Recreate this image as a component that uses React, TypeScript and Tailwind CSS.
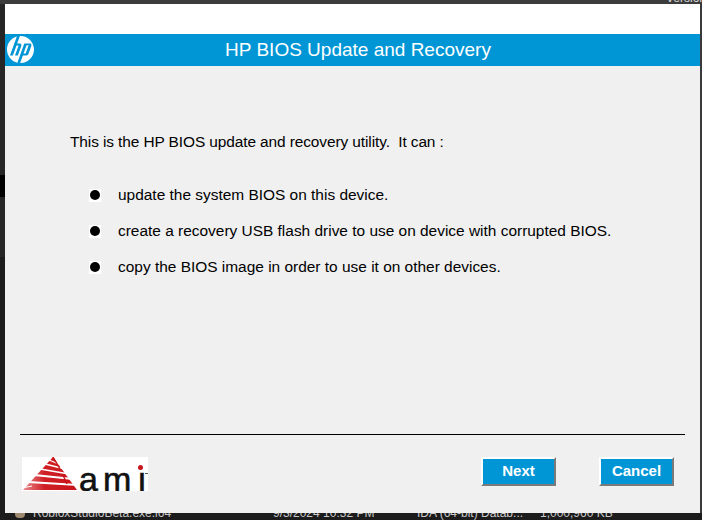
import { SiHp } from "react-icons/si";

const items = [
  "update the system BIOS on this device.",
  "create a recovery USB flash drive to use on device with corrupted BIOS.",
  "copy the BIOS image in order to use it on other devices.",
];

function AmiLogo() {
  return (
    <div className="relative flex h-[34px] w-[126px] items-end overflow-hidden bg-white">
      <svg width="56" height="34" viewBox="0 0 56 34" className="shrink-0">
        <defs>
          <linearGradient id="amiFade" x1="0" x2="1" y1="0" y2="0">
            <stop offset="0" stopColor="#e98a8d" />
            <stop offset="0.4" stopColor="#cf1f25" />
            <stop offset="1" stopColor="#c8151b" />
          </linearGradient>
        </defs>
        <polygon points="31,0 1,33 55,33" fill="url(#amiFade)" />
        <g stroke="#fff" fill="none">
          <path d="M27 3 L39 8" strokeWidth="1.2" />
          <path d="M23 7 L43 12" strokeWidth="1.4" />
          <path d="M18 12 L47 17" strokeWidth="1.7" />
          <path d="M12 18 L51 22" strokeWidth="2" />
          <path d="M6 25 L56 28" strokeWidth="2.2" />
          <path d="M0 31 L10 29" strokeWidth="1" />
        </g>
        <path d="M31 0 L38 12 M41 18 L45 27" stroke="#c8151b" strokeWidth="1.4" fill="none" />
      </svg>
      <span className="mb-[-5px] ml-[1px] whitespace-nowrap text-[34px] leading-[34px] tracking-[5px] text-[#111] [-webkit-text-stroke:0.6px_#111]">
        am
      </span>
      <span className="mb-[-5px] ml-[1px] text-[34px] leading-[34px] text-[#111] [-webkit-text-stroke:0.6px_#111]">ı</span>
      <span className="absolute left-[116px] top-[8px] h-[5px] w-[5px] rounded-full bg-[#c8151b]" />
      <span className="absolute left-[123px] top-[16px] h-px w-[3px] bg-[#555]" />
    </div>
  );
}

function NavButton({ label }: { label: string }) {
  return (
    <button className="flex h-[29px] w-[75px] items-center justify-center border-2 border-t-white border-l-white border-r-[#7a7a7a] border-b-[#7a7a7a] bg-[#0096d6] text-[15px] font-bold text-white">
      {label}
    </button>
  );
}

export default function App() {
  return (
    <div className="flex h-[520px] w-[702px] flex-col overflow-hidden bg-[#1c1c1c] font-['Liberation_Sans',sans-serif]">
      <div className="flex h-[4px] shrink-0 justify-end overflow-hidden bg-[#3c3c3c]">
        <span className="mr-[-4px] mt-[-9px] text-[12px] leading-[14px] text-[#d8d8d8]">Version</span>
      </div>
      <div className="flex h-[509px] shrink-0">
        <div className="flex w-[5px] shrink-0 flex-col bg-[#1c1c1c]">
          <div className="h-[171px] bg-[#262626]" />
          <div className="h-[22px] bg-black" />
          <div className="h-[60px] bg-[#262626]" />
        </div>
        <div className="flex w-[695px] shrink-0 flex-col bg-[#f0f0f0]">
          <div className="h-[30px] shrink-0 bg-white" />
          <div className="relative flex h-[32px] shrink-0 items-center justify-center bg-[#0096d6] pl-[11px] text-[19px] text-white">
            <SiHp className="absolute left-[2px] top-[2px] h-[27px] w-[27px] text-white" />
            HP BIOS Update and Recovery
          </div>
          <div className="flex flex-1 flex-col pl-[65px] text-[15.45px] leading-[20px] text-black">
            <p className="mt-[66px] whitespace-pre tracking-[-0.1px]">This is the HP BIOS update and recovery utility.  It can :</p>
            <ul className="mt-[33px] flex flex-col gap-[16px] pl-[19px]">
              {items.map((t) => (
                <li key={t} className="flex h-[20px] items-center gap-[17px]">
                  <span className="flex h-[13px] w-[12px] items-center justify-center bg-white">
                    <span className="h-[10px] w-[10px] rounded-full bg-black" />
                  </span>
                  {t}
                </li>
              ))}
            </ul>
          </div>
          <div className="mx-[15px] h-px shrink-0 bg-black" />
          <div className="flex h-[78px] shrink-0 items-start justify-between pl-[17px] pr-[26px] pt-[22px]">
            <AmiLogo />
            <div className="flex gap-[43px]">
              <NavButton label="Next" />
              <NavButton label="Cancel" />
            </div>
          </div>
        </div>
        <div className="w-[2px] shrink-0 bg-[#3a3a3a]" />
      </div>
      <div className="relative h-[7px] shrink-0 overflow-hidden text-[12px] leading-[14px] text-[#c8c8c8]">
        <span className="absolute left-[15px] top-0 h-[5px] w-[10px] rounded-b-sm bg-[#a08a70]" />
        <span className="absolute left-[33px] top-[-7px]">RobloxStudioBeta.exe.i64</span>
        <span className="absolute left-[273px] top-[-7px]">9/3/2024 10:32 PM</span>
        <span className="absolute left-[417px] top-[-7px]">IDA (64-bit) Datab...</span>
        <span className="absolute left-[540px] top-[-7px]">1,000,960 KB</span>
      </div>
    </div>
  );
}
